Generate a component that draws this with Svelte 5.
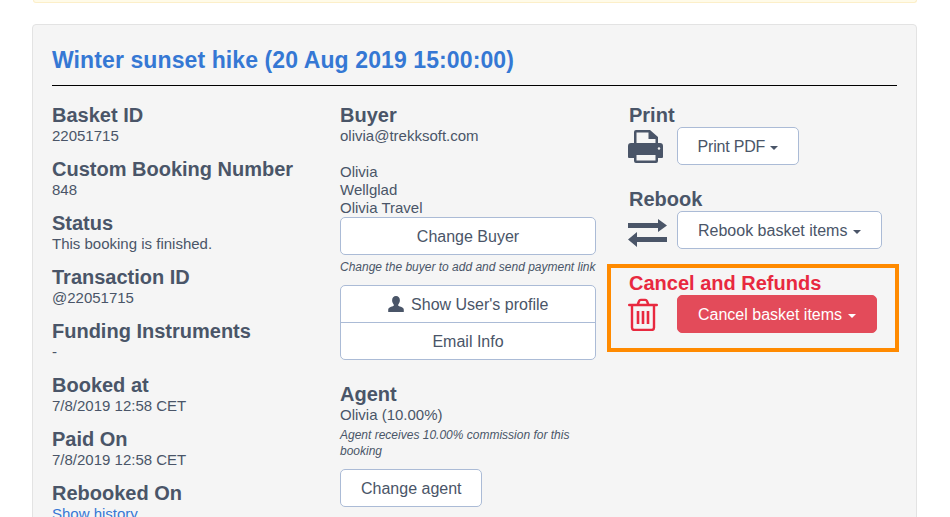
<script>
  const leftFields = [
    { label: "Basket ID", value: "22051715" },
    { label: "Custom Booking Number", value: "848" },
    { label: "Status", value: "This booking is finished." },
    { label: "Transaction ID", value: "@22051715" },
    { label: "Funding Instruments", value: "-" },
    { label: "Booked at", value: "7/8/2019 12:58 CET" },
    { label: "Paid On", value: "7/8/2019 12:58 CET" },
  ];
</script>

<div class="page">
  <div class="alert"></div>

  <div class="card">
    <h1><a href="#top">Winter sunset hike (20 Aug 2019 15:00:00)</a></h1>
    <hr />

    <div class="columns">
      <div class="col">
        {#each leftFields as field}
          <section class="field">
            <h2>{field.label}</h2>
            <p>{field.value}</p>
          </section>
        {/each}
        <section class="field">
          <h2>Rebooked On</h2>
          <p><a href="#history">Show history</a></p>
        </section>
      </div>

      <div class="col middle">
        <h2>Buyer</h2>
        <p>olivia@trekksoft.com</p>
        <p class="name">Olivia</p>
        <p>Wellglad</p>
        <p>Olivia Travel</p>
        <button class="btn wide">Change Buyer</button>
        <p class="note buyer-note">Change the buyer to add and send payment link</p>

        <div class="list">
          <button>
            <svg class="user" viewBox="0 0 16 16" width="16" height="16" aria-hidden="true">
              <path d="M8 0c2.400 0 3.900 1.700 3.900 4.200 0 1.700-.7 3.200-1.600 4.200-.3.4-.3 1 .1 1.300.9.6 2.200.8 3.500 1.500 1.200.6 1.900 1.400 1.900 2.600V16H.2v-2.200c0-1.200.7-2 1.900-2.600 1.300-.7 2.600-.9 3.500-1.500.4-.3.4-.9.1-1.300-.9-1-1.600-2.500-1.600-4.200C4.100 1.700 5.600 0 8 0z"/>
            </svg>
            Show User's profile
          </button>
          <button>Email Info</button>
        </div>

        <h2 class="agent">Agent</h2>
        <p>Olivia (10.00%)</p>
        <p class="note agent-note">Agent receives 10.00% commission for this booking</p>
        <button class="btn agent-btn">Change agent</button>
      </div>

      <div class="col">
        <h2>Print</h2>
        <div class="action">
          <span class="icon">
            <svg class="printer" viewBox="0 0 35 33" width="35" height="33" aria-hidden="true">
              <path d="M6 13V2a2 2 0 0 1 2-2h14l8 7v6h-2.500V9h-7V2.500H8.500V13z"/>
              <path fill-rule="evenodd" d="M3 13h29a3 3 0 0 1 3 3v11a1 1 0 0 1-1 1h-4v3a2 2 0 0 1-2 2H8a2 2 0 0 1-2-2v-3H1a1 1 0 0 1-1-1V16a3 3 0 0 1 3-3zM8.500 25v5.500h19V25zM31 17.200a1.300 1.300 0 1 0 0 2.600 1.300 1.300 0 0 0 0-2.600z"/>
            </svg>
          </span>
          <button class="btn print">Print PDF <i class="caret"></i></button>
        </div>

        <h2 class="rebook">Rebook</h2>
        <div class="action">
          <span class="icon">
            <svg class="swap" viewBox="0 0 39 28" width="39" height="28" aria-hidden="true">
              <path d="M0 4h30V0l9 6.500-9 6.500V9H0zM39 18H9v-5l-9 7.500L9 28v-5h30z"/>
            </svg>
          </span>
          <button class="btn">Rebook basket items <i class="caret"></i></button>
        </div>

        <div class="danger">
          <h2>Cancel and Refunds</h2>
          <div class="action">
            <span class="icon">
              <svg viewBox="0 0 30 33" width="30" height="33" fill="none" stroke="currentColor" aria-hidden="true">
                <path stroke-width="2.400" stroke-linecap="round" d="M1.200 7h27.600M9.500 7l1.500-3.800c.3-.8 1-1.300 1.800-1.300h4.400c.8 0 1.500.5 1.800 1.300L20.500 7"/>
                <path stroke-width="2.400" d="M4 7v22.500c0 1.500 1 2.500 2.500 2.500h17c1.500 0 2.500-1 2.500-2.500V7"/>
                <path stroke-width="2.600" d="M10 13v13M15 13v13M20 13v13"/>
              </svg>
            </span>
            <button class="btn primary">Cancel basket items <i class="caret"></i></button>
          </div>
        </div>
      </div>
    </div>
  </div>
</div>

<style>
  :global(body) {
    margin: 0;
    background: #fff;
  }
  .page {
    height: 517px;
    overflow: hidden;
    font-family: "Liberation Sans", Arial, sans-serif;
    font-size: 15px;
    line-height: 18px;
    color: #4a5568;
  }
  .alert {
    height: 2px;
    margin: 0 33px 21px;
    background: #fffbe9;
    border: 1px solid #fcefc9;
    border-top: 0;
    border-radius: 0 0 4px 4px;
  }
  .card {
    margin: 0 33px 0 32px;
    padding: 20px 19px 40px;
    background: #f5f5f5;
    border: 1px solid #e3e3e3;
    border-radius: 4px;
  }
  h1 {
    margin: 0 0 10px;
    font-size: 23px;
    line-height: 30px;
    font-weight: 700;
    letter-spacing: 0.1px;
  }
  a {
    color: #3578d4;
    text-decoration: none;
  }
  hr {
    margin: 0 0 17px;
    border: 0;
    border-top: 1px solid #000;
  }
  .columns {
    display: grid;
    grid-template-columns: 288px 289px 1fr;
  }
  h2 {
    margin: 0;
    font-size: 20px;
    line-height: 24px;
    font-weight: 700;
  }
  p {
    margin: 0;
  }
  .field {
    margin-bottom: 12px;
  }
  .middle {
    padding-right: 33px;
  }
  .name {
    margin-top: 18px;
  }
  .note {
    font-size: 12px;
    line-height: 16px;
    font-style: italic;
  }
  .buyer-note {
    margin-top: 4px;
    margin-bottom: 10px;
    white-space: nowrap;
  }
  .agent-note {
    margin-top: 3px;
    padding-right: 10px;
  }
  .btn {
    display: block;
    height: 38px;
    padding: 2px 20px 0;
    background: #fff;
    border: 1px solid #abbbd6;
    border-radius: 5px;
    font: inherit;
    font-size: 16px;
    color: inherit;
    white-space: nowrap;
  }
  .wide {
    width: 100%;
  }
  .print {
    width: 122px;
    padding-left: 0;
    padding-right: 0;
    letter-spacing: -0.2px;
  }
  .agent-btn {
    margin-top: 10px;
    width: 142px;
  }
  .list {
    display: flex;
    flex-direction: column;
    background: #fff;
    border: 1px solid #abbbd6;
    border-radius: 5px;
    overflow: hidden;
  }
  .list button {
    height: 36px;
    padding: 2px 0 0;
    background: none;
    border: 0;
    font: inherit;
    font-size: 16px;
    color: inherit;
  }
  .list button + button {
    height: 37px;
    border-top: 1px solid #abbbd6;
  }
  .user {
    fill: currentColor;
    vertical-align: -2px;
    margin-right: 3px;
  }
  .agent {
    margin-top: 22px;
  }
  .rebook {
    margin-top: 22px;
  }
  .action {
    display: flex;
    align-items: center;
  }
  .icon {
    flex: none;
    width: 49px;
    margin-left: -1px;
    display: flex;
    align-items: center;
    fill: currentColor;
  }
  .printer {
    margin-top: 1px;
  }
  .swap {
    margin-top: 6px;
  }
  .danger {
    margin: 15px -2px 0 -22px;
    padding: 3px 18px 15px;
    border: 4px solid #ff8a00;
    color: #e8293f;
  }
  .primary {
    background: #e34b5a;
    border-color: #e34b5a;
    color: #fff;
  }
  .caret {
    display: inline-block;
    margin-left: 1px;
    vertical-align: middle;
    border-top: 4px solid currentColor;
    border-left: 4px solid transparent;
    border-right: 4px solid transparent;
  }
</style>
